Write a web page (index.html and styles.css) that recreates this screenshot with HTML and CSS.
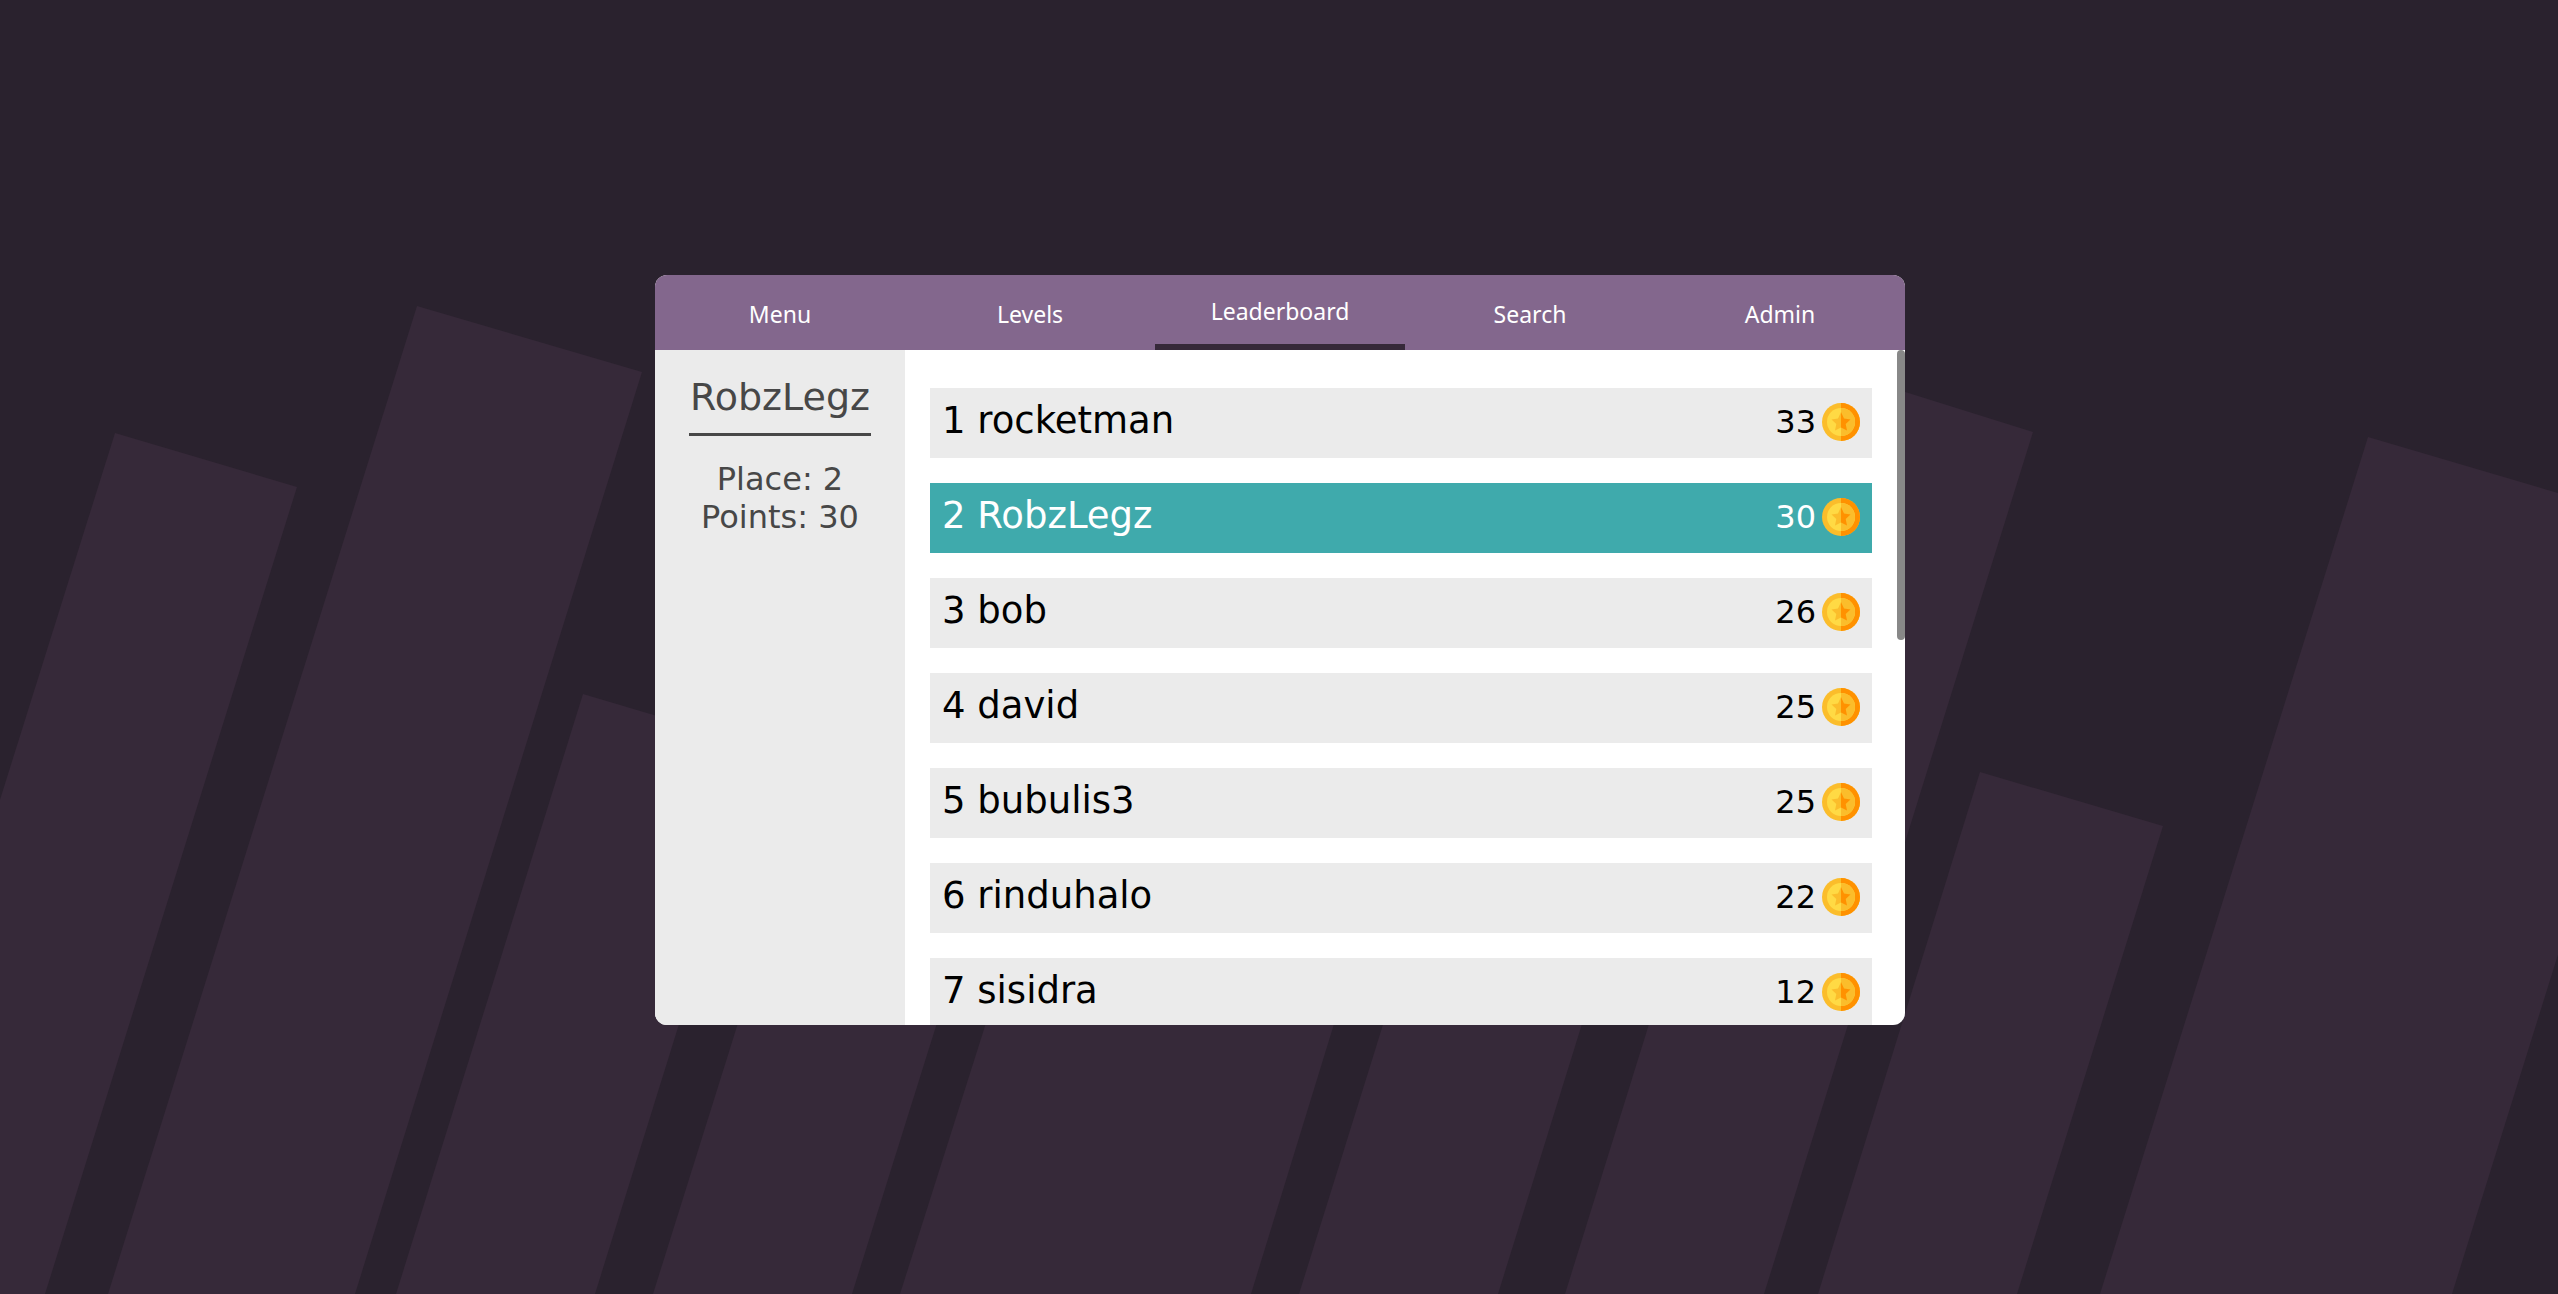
FILE: index.html
```html
<!DOCTYPE html>
<html lang="en">
<head>
<meta charset="utf-8">
<meta name="viewport" content="width=device-width, initial-scale=1">
<title>Leaderboard</title>
<link rel="stylesheet" href="styles.css">
</head>
<body>
<svg class="backdrop" viewBox="0 0 2558 1294" preserveAspectRatio="xMidYMax slice" aria-hidden="true">
  <path d="M115 433L297 487L45 1294H-155z"/>
  <path d="M417 306L642 372L355 1294H108z"/>
  <path d="M583 694L765 748L595 1294H396z"/>
  <path d="M808 800L990 854L852 1294H653z"/>
  <path d="M1025 900L1350 972L1251 1294H900z"/>
  <path d="M1425 890L1610 934L1498 1294H1299z"/>
  <path d="M1851 375L2033 432L1764 1294H1565z"/>
  <path d="M1980 772L2163 826L2017 1294H1818z"/>
  <path d="M2368 437L2690 532L2452 1294H2100z"/>
</svg>
<svg class="symbols" aria-hidden="true">
  <symbol id="coin" viewBox="0 0 38 38">
    <circle cx="19" cy="19" r="19" fill="#fbbd2b"/>
    <path d="M19 0a19 19 0 0 1 0 38z" fill="#ff9100"/>
    <circle cx="19" cy="19" r="14" fill="#ffda44"/>
    <path d="M19 5a14 14 0 0 1 0 28z" fill="#fbbd2b"/>
    <path d="M19 9L16 15.500L9.500 16.400L14.300 21L13 27.600L19 24.500z" fill="#fbbd2b"/>
    <path d="M19 9L22 15.500L28.500 16.400L23.700 21L25 27.600L19 24.500z" fill="#ff9100"/>
  </symbol>
</svg>
<main class="page">
  <div class="panel">
    <nav class="tabs">
      <a class="tab" href="#menu">Menu</a>
      <a class="tab" href="#levels">Levels</a>
      <a class="tab tab-active" href="#leaderboard" aria-current="page">Leaderboard</a>
      <a class="tab" href="#search">Search</a>
      <a class="tab" href="#admin">Admin</a>
    </nav>
    <div class="content">
      <aside class="profile">
        <h2 class="profile-name">RobzLegz</h2>
        <p class="stat">Place: 2</p>
        <p class="stat">Points: 30</p>
      </aside>
      <ol class="board">
        <li class="row"><span class="player">1 rocketman</span><span class="score">33<svg class="coin"><use href="#coin"/></svg></span></li>
        <li class="row row-me"><span class="player">2 RobzLegz</span><span class="score">30<svg class="coin"><use href="#coin"/></svg></span></li>
        <li class="row"><span class="player">3 bob</span><span class="score">26<svg class="coin"><use href="#coin"/></svg></span></li>
        <li class="row"><span class="player">4 david</span><span class="score">25<svg class="coin"><use href="#coin"/></svg></span></li>
        <li class="row"><span class="player">5 bubulis3</span><span class="score">25<svg class="coin"><use href="#coin"/></svg></span></li>
        <li class="row"><span class="player">6 rinduhalo</span><span class="score">22<svg class="coin"><use href="#coin"/></svg></span></li>
        <li class="row"><span class="player">7 sisidra</span><span class="score">12<svg class="coin"><use href="#coin"/></svg></span></li>
      </ol>
      <div class="track"><div class="thumb"></div></div>
    </div>
  </div>
</main>
</body>
</html>
```
FILE: styles.css
```css
* {
  box-sizing: border-box;
}

body {
  margin: 0;
  background: #2a222e;
  font-family: "DejaVu Sans", sans-serif;
}

.backdrop {
  position: fixed;
  inset: 0;
  z-index: -1;
  width: 100%;
  height: 100%;
  fill: #362939;
}

.symbols {
  position: absolute;
  width: 0;
  height: 0;
}

.page {
  display: flex;
  align-items: center;
  justify-content: center;
  min-height: 100vh;
  padding: 6px 0 0 2px;
}

.panel {
  display: flex;
  flex-direction: column;
  width: 100%;
  max-width: 1250px;
  height: 750px;
  overflow: hidden;
  border-radius: 12px;
  background: #fff;
}

.tabs {
  display: flex;
  flex: none;
  height: 75px;
  background: #83678d;
}

.tab {
  display: flex;
  flex: 1;
  align-items: center;
  justify-content: center;
  padding-top: 2px;
  color: #fff;
  font: 23px "Noto Sans", sans-serif;
  text-decoration: none;
}

.tab-active {
  border-bottom: 6px solid #362939;
}

.content {
  display: flex;
  flex: 1;
  min-height: 0;
}

.profile {
  display: flex;
  flex: 0 0 20%;
  flex-direction: column;
  align-items: center;
  padding-top: 25px;
  background: #ebebeb;
  color: #474747;
}

.profile-name {
  margin: 0 0 24px;
  padding: 0 1px 14px;
  border-bottom: 3px solid #474747;
  font-size: 38px;
  font-weight: 400;
  line-height: 44px;
}

.stat {
  margin: 0;
  font-size: 32px;
  line-height: 38px;
}

.board {
  display: flex;
  flex: 1;
  flex-direction: column;
  gap: 25px;
  margin: 0;
  padding: 38px 25px;
  overflow: hidden;
  list-style: none;
}

.row {
  display: flex;
  flex: none;
  align-items: center;
  justify-content: space-between;
  height: 70px;
  padding: 0 12px;
  background: #ebebeb;
}

.row-me {
  background: #3faaac;
  color: #fff;
}

.player {
  padding-bottom: 5px;
  font-size: 37px;
}

.score {
  display: flex;
  align-items: center;
  gap: 6px;
  padding-bottom: 2px;
  font-size: 32px;
}

.coin {
  width: 38px;
  height: 38px;
}

.track {
  flex: 0 0 8px;
}

.thumb {
  height: 43%;
  border-radius: 4px;
  background: #888;
}
```
